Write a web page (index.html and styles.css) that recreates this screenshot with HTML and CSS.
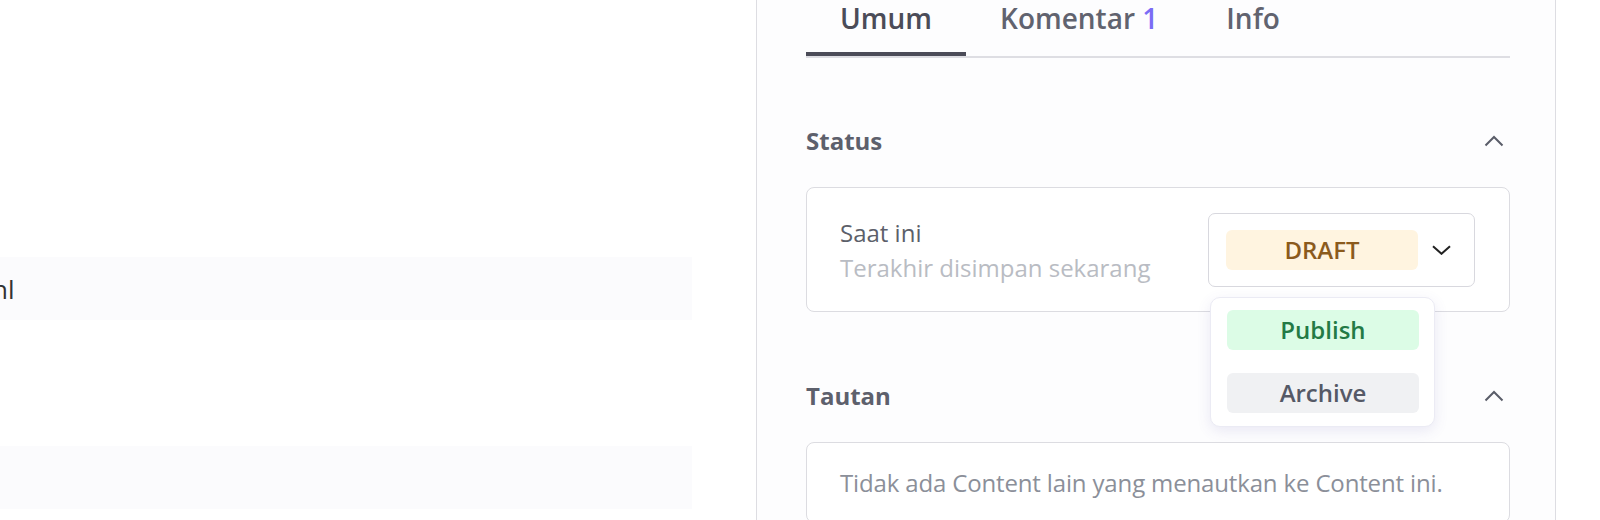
FILE: index.html
```html
<!DOCTYPE html>
<html lang="id">
<head>
  <meta charset="UTF-8" />
  <meta name="viewport" content="width=device-width, initial-scale=1.0" />
  <title>Content</title>
  <link rel="stylesheet" href="styles.css">
</head>
<body>
  <div class="page">
    <div class="list">
      <div class="row row-shaded"><span class="row-name">nl</span></div>
      <div class="row"></div>
      <div class="row"></div>
      <div class="row row-shaded"></div>
    </div>

    <aside class="panel">
      <nav class="tabs">
        <a class="tab tab-active">Umum</a>
        <a class="tab">Komentar <span class="count">1</span></a>
        <a class="tab">Info</a>
      </nav>

      <section class="group group-first">
        <div class="group-head">
          <h3>Status</h3>
          <svg class="chev-up" width="20" height="12" viewBox="0 0 20 12"><path d="M1.5 10.5 L10 2 L18.5 10.5" /></svg>
        </div>
        <div class="card status-card">
          <div class="status-text">
            <div class="status-now">Saat ini</div>
            <div class="status-saved">Terakhir disimpan sekarang</div>
          </div>
          <div class="select-wrap">
            <div class="select">
              <span class="badge badge-draft">DRAFT</span>
              <svg class="chev-down" width="19" height="10" viewBox="0 0 19 10"><path d="M1 1.2 L9.5 8.8 L18 1.2" /></svg>
            </div>
            <ul class="menu">
              <li class="badge badge-publish">Publish</li>
              <li class="badge badge-archive">Archive</li>
            </ul>
          </div>
        </div>
      </section>

      <section class="group">
        <div class="group-head">
          <h3>Tautan</h3>
          <svg class="chev-up" width="20" height="12" viewBox="0 0 20 12"><path d="M1.5 10.5 L10 2 L18.5 10.5" /></svg>
        </div>
        <div class="card links-card">
          Tidak ada Content lain yang menautkan ke Content ini.
        </div>
      </section>
    </aside>
  </div>
</body>
</html>
```

FILE: styles.css
```css
* {
  box-sizing: border-box;
}
body {
  margin: 0;
  background: #fff;
  font-family: 'Open Sans', sans-serif;
  color: #555a66;
}
.page {
  display: flex;
  height: 520px;
  overflow: hidden;
}
.list {
  flex: none;
  width: 692px;
  padding-top: 257px;
}
.row {
  height: 63px;
  display: flex;
  align-items: center;
  font-size: 26px;
  color: #333;
  overflow: hidden;
}
.row-shaded {
  background: #fbfbfd;
}
.row-name {
  margin-left: -8px;
}
.panel {
  flex: none;
  width: 800px;
  margin-left: 64px;
  padding: 0 45px 0 49px;
  background: #fdfdfe;
  border-left: 1px solid #dddde2;
  border-right: 1px solid #dddde2;
}
.tabs {
  display: flex;
  border-bottom: 2px solid #dedee3;
}
.tab {
  padding: 0 34px 16px;
  font-size: 28px;
  line-height: 36px;
  font-weight: 600;
  color: #61636f;
  border-bottom: 4px solid transparent;
}
.tab-active {
  color: #4b4c58;
  border-bottom-color: #4b4c58;
}
.count {
  color: #7b6cf5;
}
.group-head {
  display: flex;
  justify-content: space-between;
  align-items: center;
  margin-top: 68px;
  padding-right: 6px;
}
.group-first .group-head {
  margin-top: 67px;
}
.group-head h3 {
  margin: 0;
  font-size: 24px;
  line-height: 32px;
  font-weight: 700;
  color: #5d606c;
}
.chev-up path {
  fill: none;
  stroke: #5a5d69;
  stroke-width: 2;
}
.card {
  margin-top: 30px;
  background: #fff;
  border: 1px solid #dcdce1;
  border-radius: 8px;
}
.status-card {
  display: flex;
  align-items: center;
  justify-content: space-between;
  height: 125px;
  padding: 0 34px 0 33px;
}
.status-text {
  font-size: 24px;
  line-height: 35px;
}
.status-now {
  color: #5c5f6a;
}
.status-saved {
  color: #b9bcc3;
}
.select-wrap {
  position: relative;
}
.select {
  display: flex;
  align-items: center;
  gap: 14px;
  width: 267px;
  height: 74px;
  padding: 0 23px 0 17px;
  background: #fff;
  border: 1px solid #d8d8de;
  border-radius: 7px;
}
.chev-down path {
  fill: none;
  stroke: #222;
  stroke-width: 2;
}
.badge {
  display: flex;
  align-items: center;
  justify-content: center;
  width: 192px;
  height: 40px;
  border-radius: 6px;
  font-size: 24px;
  font-weight: 600;
}
.badge-draft {
  background: #fff4e0;
  color: #8b5a1c;
}
.menu {
  position: absolute;
  top: 84px;
  left: 2px;
  z-index: 1;
  display: flex;
  flex-direction: column;
  gap: 23px;
  width: 225px;
  margin: 0;
  padding: 12px 16px 13px;
  list-style: none;
  background: #fff;
  border: 1px solid #ebebf4;
  border-radius: 10px;
  box-shadow: 0 4px 14px rgba(90, 80, 170, 0.12);
}
.badge-publish {
  background: #dcfce6;
  color: #237a45;
}
.badge-archive {
  background: #f0f1f3;
  color: #555966;
}
.links-card {
  padding: 22px 33px;
  font-size: 24px;
  line-height: 35px;
  letter-spacing: -0.15px;
  color: #8b8f99;
}
```
